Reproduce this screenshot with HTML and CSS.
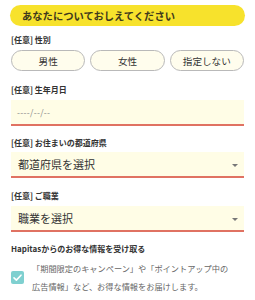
FILE: index.html
```html
<!DOCTYPE html>
<html lang="ja">
<head>
<meta charset="utf-8">
<link rel="stylesheet" href="styles.css">
</head>
<body>
<div class="page">
  <h2 class="title">あなたについておしえてください</h2>

  <div class="label l1">[任意] 性別</div>
  <div class="genders">
    <button class="pill">男性</button>
    <button class="pill">女性</button>
    <button class="pill">指定しない</button>
  </div>

  <div class="label l2">[任意] 生年月日</div>
  <div class="field date"><span class="ph">----/--/--</span></div>

  <div class="label l3">[任意] お住まいの都道府県</div>
  <div class="field select s1"><span class="val">都道府県を選択</span><span class="arrow"></span></div>

  <div class="label l4">[任意] ご職業</div>
  <div class="field select s2"><span class="val">職業を選択</span><span class="arrow"></span></div>

  <div class="label l5">Hapitasからのお得な情報を受け取る</div>
  <div class="optin">
    <span class="check"><svg width="13" height="13" viewBox="0 0 13 13"><path d="M3 6.8 L5.4 9.1 L10 4.2" fill="none" stroke="#fff" stroke-width="1.6" stroke-linecap="round" stroke-linejoin="round"/></svg></span>
    <p class="note">「期間限定のキャンペーン」や「ポイントアップ中の広告情報」など、お得な情報をお届けします。</p>
  </div>
</div>
</body>
</html>
```

FILE: styles.css
```css
* { box-sizing: border-box; }
html, body { margin: 0; padding: 0; background: #fff; }
body {
  font-family: "Noto Sans CJK JP", "Noto Sans", sans-serif;
  color: #333;
  width: 255px;
  height: 300px;
  overflow: hidden;
}
.page { padding: 5px 11px 0 11px; }
.title {
  margin: 0 -1px;
  height: 21px;
  line-height: 21px;
  border-radius: 11px;
  background: #f7e22c;
  color: #3f3a1c;
  font-size: 10.3px;
  font-weight: 700;
  padding-left: 12px;
  letter-spacing: 0;
}
.label {
  font-size: 8px;
  line-height: 12px;
  height: 12px;
  font-weight: 700;
  color: #333;
}
.l1 { margin-top: 8px; }
.l2 { margin-top: 13px; }
.l3 { margin-top: 11px; }
.l4 { margin-top: 12px; }
.l5 { margin-top: 11px; font-size: 8px; }
.genders {
  display: grid;
  grid-template-columns: 1fr 1fr 1fr;
  gap: 5px;
  margin-top: 4px;
}
.pill {
  height: 21px;
  border: 1px solid #b9b9b9;
  border-radius: 11px;
  background: #fffded;
  font-family: "Noto Sans CJK JP", sans-serif;
  font-size: 9.6px;
  color: #333;
  padding: 0;
}
.field {
  background: #fffde6;
  border-bottom: 2px solid #e07262;
  height: 26px;
  display: flex;
  align-items: center;
}
.date { margin-top: 4px; padding-left: 6px; }
.ph { font-size: 8.5px; color: #888; letter-spacing: 0.3px; }
.select { padding-left: 7px; padding-right: 6px; justify-content: space-between; }
.s1 { margin-top: 3px; }
.s2 { margin-top: 4px; }
.val { font-size: 11px; color: #333; }
.arrow {
  width: 0; height: 0;
  border-left: 3px solid transparent;
  border-right: 3px solid transparent;
  border-top: 3px solid #777;
  margin-top: 2px;
}
.optin {
  display: flex;
  align-items: center;
  margin-top: 4px;
}
.check {
  width: 13px; height: 13px;
  flex: none;
  border-radius: 2px;
  background: #7fd0d0;
  display: flex;
}
.note {
  margin: 0 0 0 8px;
  font-size: 8.2px;
  line-height: 18px;
  color: #666;
  width: 202px;
}
```
